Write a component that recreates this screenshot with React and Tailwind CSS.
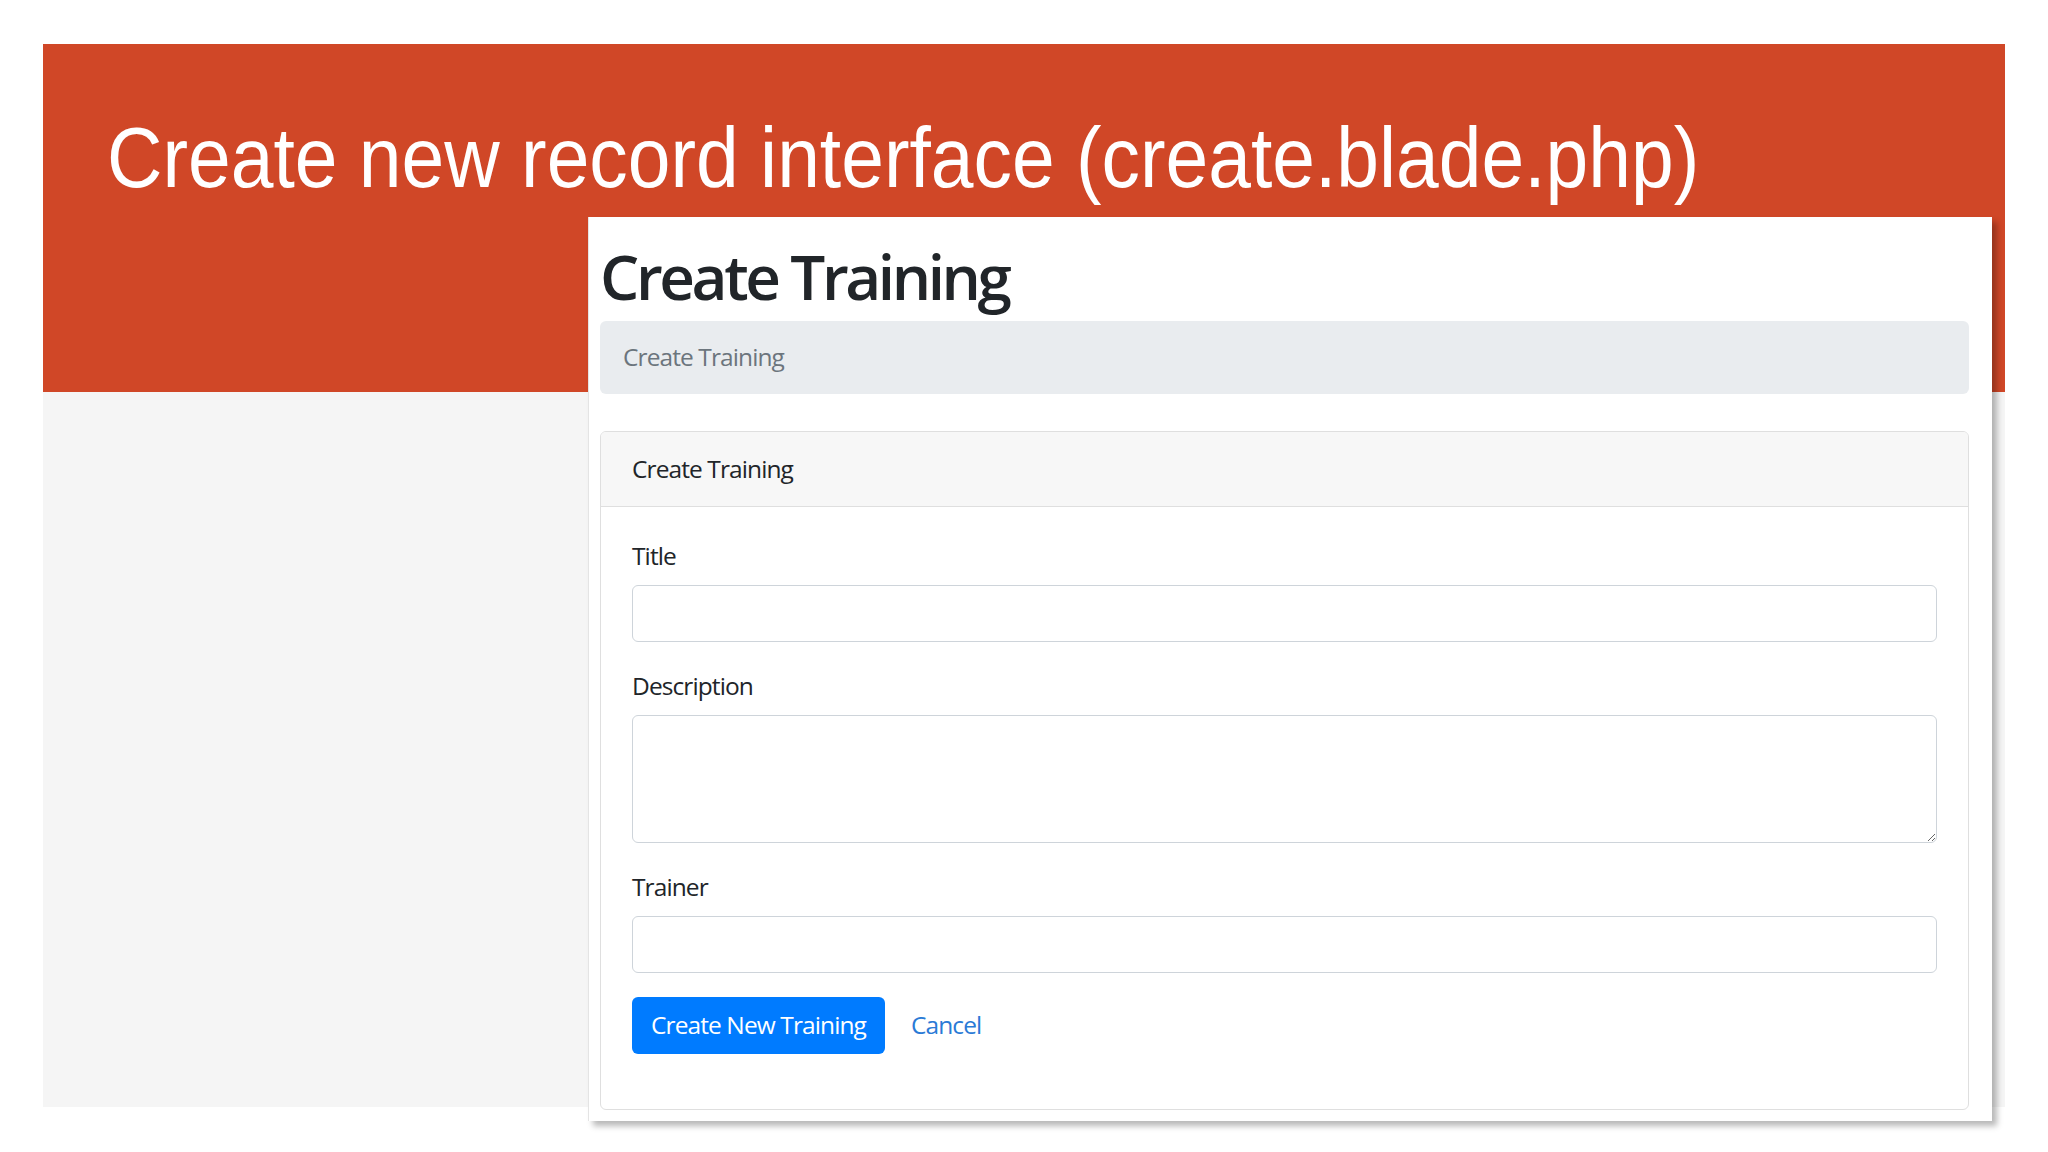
export default function App() {
  const ui = { fontFamily: '"Open Sans", "Noto Sans", sans-serif' };
  return (
    <div className="w-[2048px] h-[1152px] bg-white pt-[44px] pl-[43px] overflow-hidden">
      <div className="relative w-[1962px] h-[1063px] flex flex-col">
        <div className="h-[348px] bg-[#d04727] pl-[64px] pt-[70px]">
          <h1
            className="text-white text-[86px] leading-none font-normal whitespace-nowrap origin-left scale-x-[0.893]"
            style={{ fontFamily: '"Liberation Sans", Arial, sans-serif' }}
          >
            Create new record interface (create.blade.php)
          </h1>
        </div>
        <div className="flex-1 bg-[#f5f5f5]" />

        <div
          className="absolute left-[545px] top-[173px] w-[1404px] bg-white pl-[11px] pr-[23px] pt-[22px] pb-[11px] shadow-[5px_5px_6px_rgba(0,0,0,0.28)] border-l border-[#e4e4e4]"
          style={ui}
        >
          <div className="text-[62px] leading-[74px] font-semibold text-[#212529] tracking-[-3.4px]">
            Create Training
          </div>
          <div className="mt-[8px] h-[73px] bg-[#e9ecef] rounded-[6px] flex items-center pl-[23px] text-[24.5px] tracking-[-0.9px] text-[#6c757d]">
            Create Training
          </div>

          <div className="mt-[37px] border border-[#dfdfdf] rounded-[6px] overflow-hidden">
            <div className="h-[75px] bg-[#f7f7f7] border-b border-[#dfdfdf] flex items-center pl-[31px] text-[24.5px] tracking-[-0.9px] text-[#212529]">
              Create Training
            </div>
            <div className="px-[31px] pt-[30px] pb-[55px] text-[24.5px] tracking-[-0.9px] text-[#212529]">
              <div className="leading-[37px]">Title</div>
              <input
                type="text"
                className="mt-[11px] block w-full h-[57px] border border-[#ced4da] rounded-[6px] bg-white outline-none"
              />
              <div className="mt-[25px] leading-[37px]">Description</div>
              <textarea
                className="mt-[11px] block w-full h-[128px] border border-[#ced4da] rounded-[6px] bg-white outline-none"
              />
              <div className="mt-[25px] leading-[37px]">Trainer</div>
              <input
                type="text"
                className="mt-[11px] block w-full h-[57px] border border-[#ced4da] rounded-[6px] bg-white outline-none"
              />
              <div className="mt-[24px] flex items-center gap-[26px]">
                <button className="h-[57px] px-[19px] bg-[#007bff] text-white rounded-[6px] text-[24.5px] tracking-[-0.9px]">
                  Create New Training
                </button>
                <span className="text-[#2a7ad6] text-[24.5px] tracking-[-0.9px]">Cancel</span>
              </div>
            </div>
          </div>
        </div>
      </div>
    </div>
  );
}
